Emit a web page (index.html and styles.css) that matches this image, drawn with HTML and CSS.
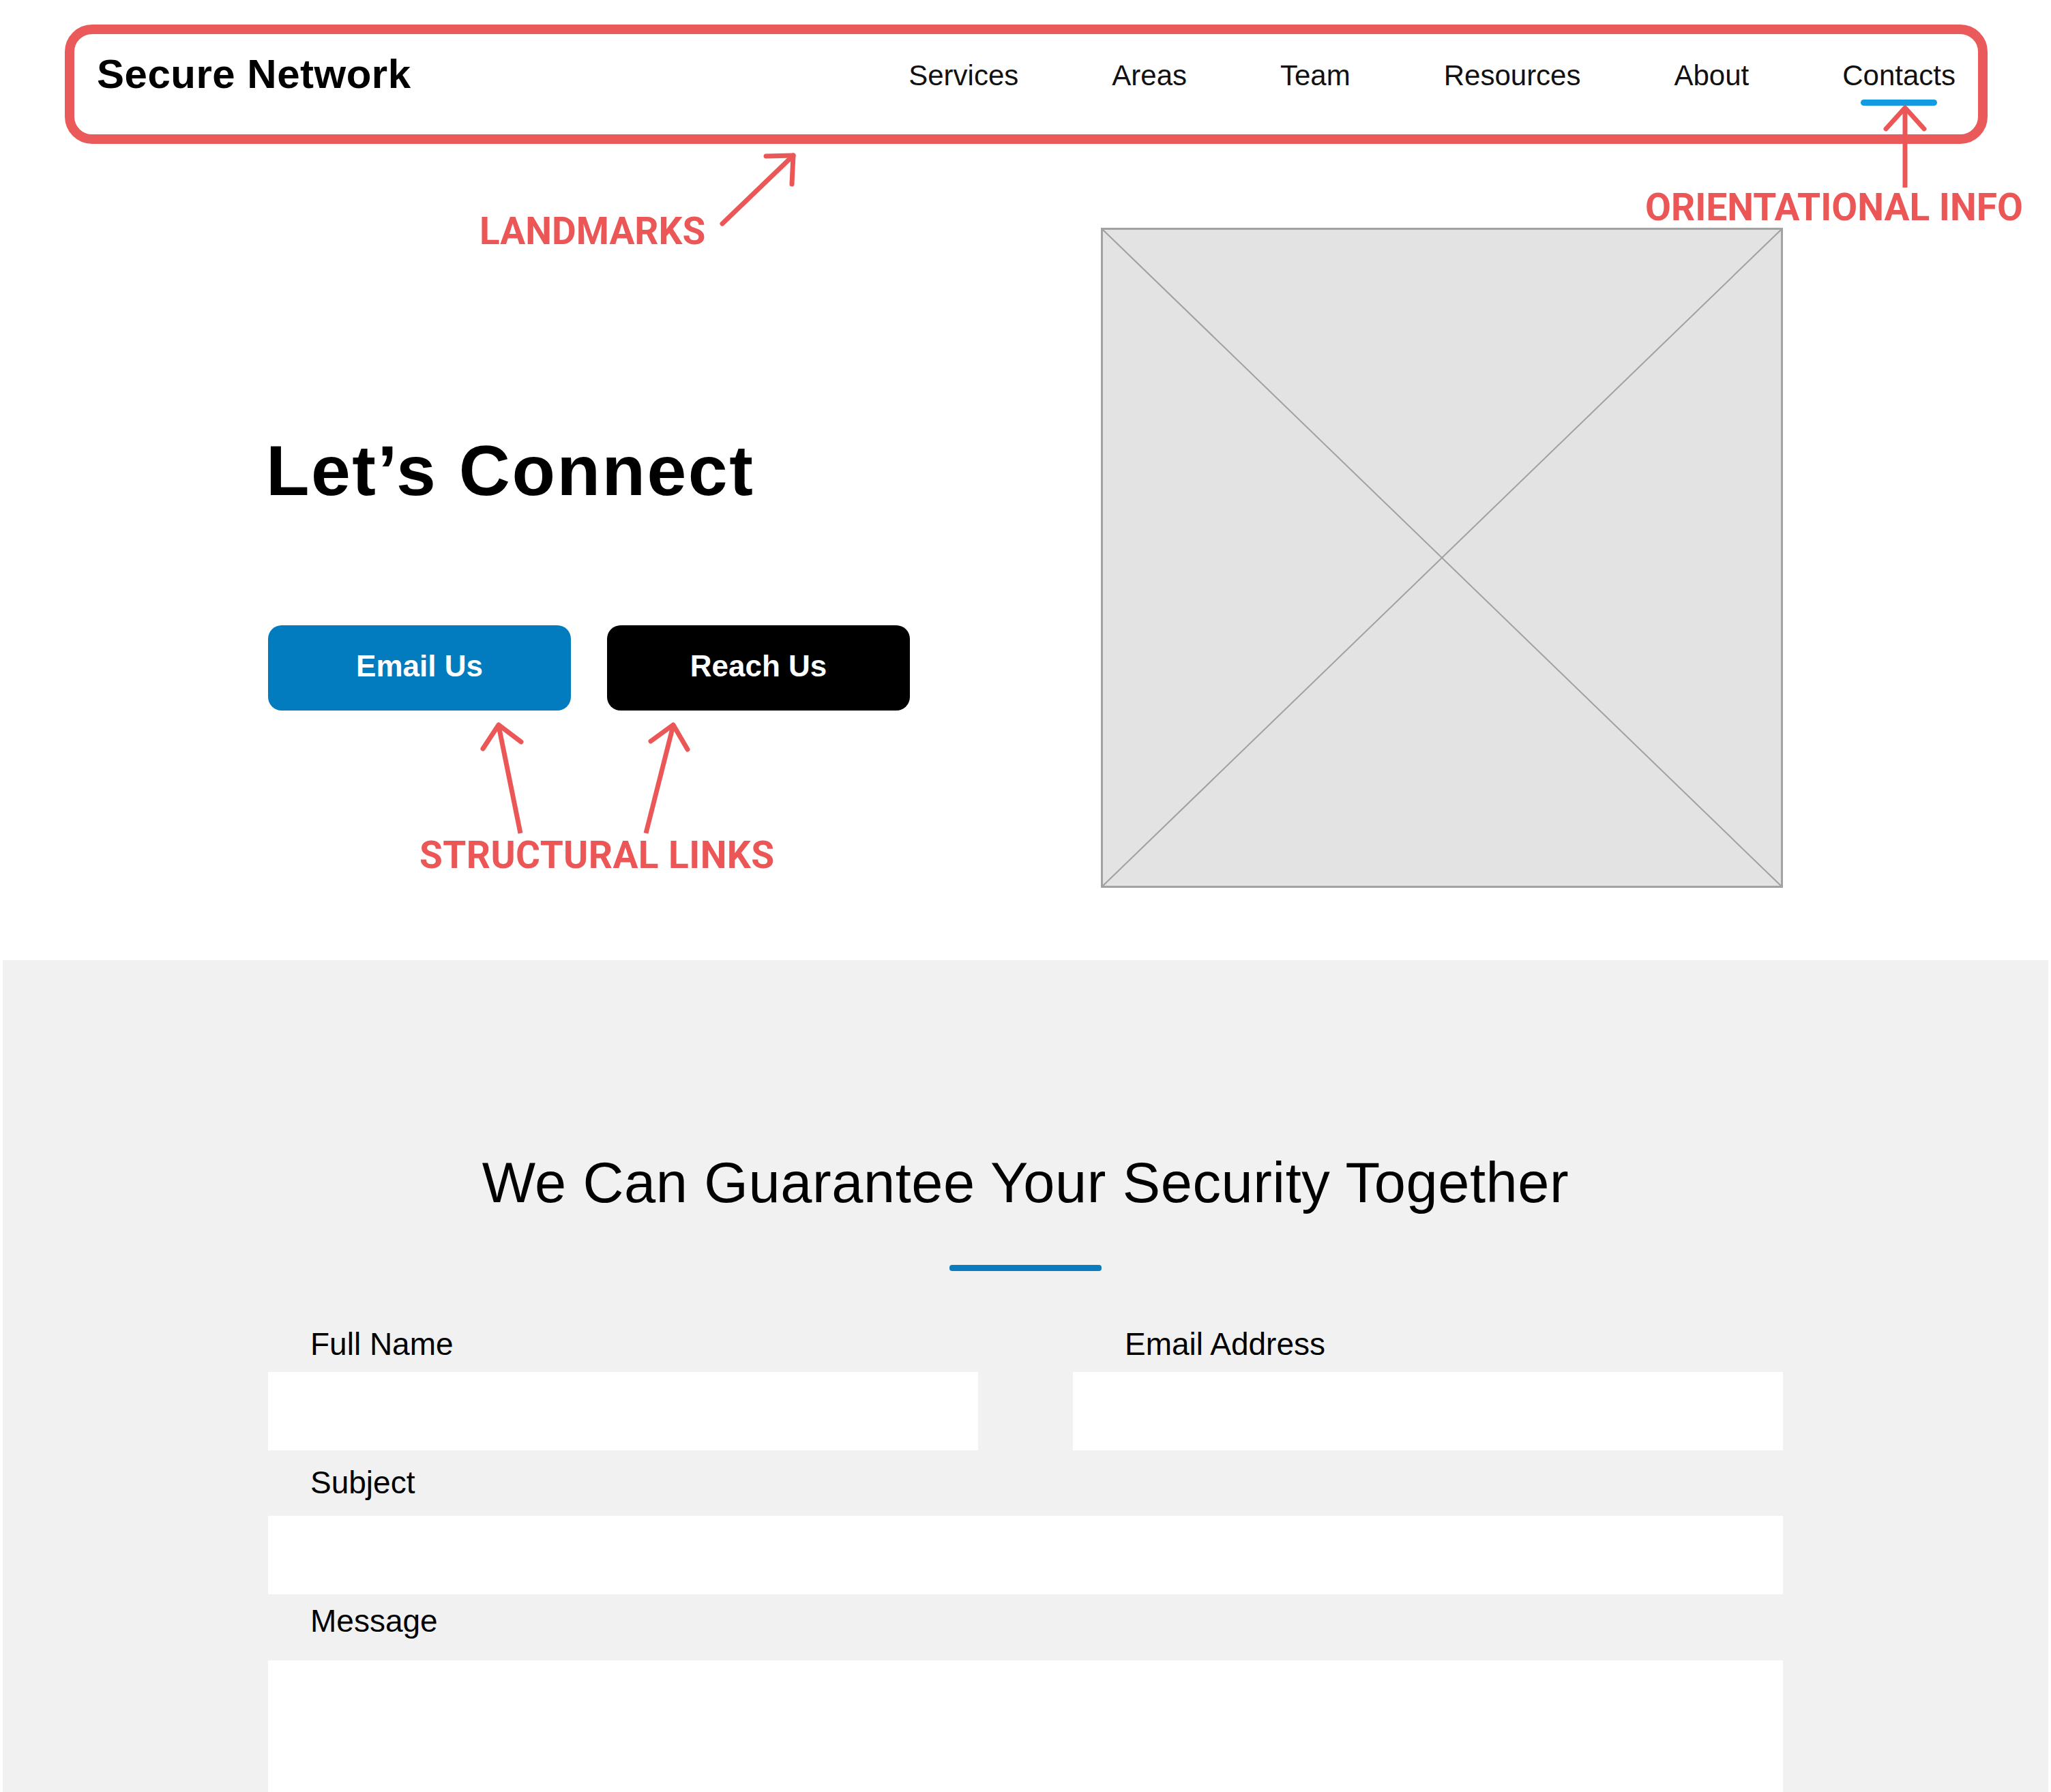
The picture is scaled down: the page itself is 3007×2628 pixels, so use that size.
FILE: index.html
```html
<!DOCTYPE html>
<html lang="en">
<head>
<meta charset="utf-8">
<title>Secure Network – Contacts</title>
<link rel="stylesheet" href="styles.css">
</head>
<body>
<div class="page">
  <header class="topbar">
    <div class="brand">Secure Network</div>
    <nav class="nav">
      <a class="nav-link" href="#">Services</a>
      <a class="nav-link" href="#">Areas</a>
      <a class="nav-link" href="#">Team</a>
      <a class="nav-link" href="#">Resources</a>
      <a class="nav-link" href="#">About</a>
      <a class="nav-link is-current" href="#">Contacts</a>
    </nav>
  </header>

  <section class="hero">
    <div class="hero-text">
      <h1 class="hero-title">Let’s Connect</h1>
      <div class="hero-actions">
        <a class="btn btn-blue" href="#">Email Us</a>
        <a class="btn btn-black" href="#">Reach Us</a>
      </div>
    </div>
    <div class="placeholder">
      <svg class="placeholder-x" viewBox="0 0 100 100" preserveAspectRatio="none">
        <line x1="0" y1="0" x2="100" y2="100" vector-effect="non-scaling-stroke"/>
        <line x1="100" y1="0" x2="0" y2="100" vector-effect="non-scaling-stroke"/>
      </svg>
    </div>
  </section>

  <section class="contact">
    <h2 class="contact-title">We Can Guarantee Your Security Together</h2>
    <div class="divider"></div>
    <form class="form">
      <div class="form-row two row-name">
        <div class="field">
          <label class="field-label">Full Name</label>
          <input class="field-input" type="text">
        </div>
        <div class="field">
          <label class="field-label indent-more">Email Address</label>
          <input class="field-input" type="email">
        </div>
      </div>
      <div class="form-row row-subject">
        <div class="field">
          <label class="field-label">Subject</label>
          <input class="field-input" type="text">
        </div>
      </div>
      <div class="form-row row-message">
        <div class="field">
          <label class="field-label">Message</label>
          <textarea class="field-input field-area"></textarea>
        </div>
      </div>
    </form>
  </section>

  <!-- annotation layer -->
  <div class="note note-landmarks">LANDMARKS</div>
  <div class="note note-orient">ORIENTATIONAL INFO</div>
  <div class="note note-links">STRUCTURAL LINKS</div>
  <svg class="arrows" width="3007" height="1400" viewBox="0 0 3007 1400">
    <g>
      <line x1="1059" y1="328" x2="1163" y2="228"/>
      <polyline points="1123,229 1163,228 1161,270"/>
      <line x1="2793" y1="160" x2="2793" y2="275" stroke-linecap="butt"/>
      <polyline points="2765,189 2793,158 2821,189"/>
      <line x1="763" y1="1222" x2="731" y2="1064" stroke-linecap="butt"/>
      <polyline points="708,1098 731,1063 764,1088"/>
      <line x1="947" y1="1222" x2="987" y2="1064" stroke-linecap="butt"/>
      <polyline points="954,1087 987,1063 1008,1099"/>
    </g>
  </svg>
</div>
</body>
</html>
```

FILE: styles.css
```css
* { box-sizing: border-box; }

html, body {
  margin: 0;
  padding: 0;
  background: #ffffff;
}

body {
  font-family: "Liberation Sans", Arial, sans-serif;
  color: #000;
}

.page {
  position: relative;
  width: 3007px;
  min-height: 2628px;
  overflow: hidden;
}

/* ---------- header ---------- */
.topbar {
  margin: 36px 93px 0 95px;
  height: 175px;
  border: 14px solid #eb5a5a;
  border-radius: 40px;
  display: flex;
  justify-content: space-between;
  align-items: flex-start;
  padding: 29px 33px 0 33px;
}

.brand {
  font-size: 60px;
  line-height: 1;
  font-weight: 700;
  letter-spacing: 0.5px;
}

.nav {
  display: flex;
  gap: 137px;
  margin-top: 11px;
}

.nav-link {
  position: relative;
  font-size: 42px;
  line-height: 1;
  color: #111;
  text-decoration: none;
}

.nav-link.is-current::after {
  content: "";
  position: absolute;
  left: 50%;
  top: 56px;
  width: 112px;
  height: 9px;
  margin-left: -56px;
  border-radius: 5px;
  background: #139ae0;
}

/* ---------- hero ---------- */
.hero {
  display: flex;
  margin-top: 123px;
  padding: 0 0 106px 393px;
}

.hero-text {
  flex: 0 0 1221px;
  padding-top: 304px;
}

.hero-title {
  margin: 0 0 0 -3px;
  font-size: 104px;
  line-height: 1;
  font-weight: 700;
  letter-spacing: 2.5px;
}

.hero-actions {
  display: flex;
  gap: 53px;
  margin-top: 175px;
}

.btn {
  width: 444px;
  height: 125px;
  border-radius: 20px;
  display: flex;
  align-items: center;
  justify-content: center;
  padding-bottom: 6px;
  font-size: 44px;
  font-weight: 700;
  color: #fff;
  text-decoration: none;
}

.btn-blue { background: #027cbe; }
.btn-black { background: #000; }

.placeholder {
  width: 1000px;
  height: 968px;
  border: 3px solid #a2a2a2;
  background: #e3e3e3;
}

.placeholder-x {
  display: block;
  width: 100%;
  height: 100%;
}

.placeholder-x line {
  stroke: #a0a0a0;
  stroke-width: 2;
}

/* ---------- contact form ---------- */
.contact {
  margin: 0 4px;
  background: #f1f1f1;
  padding: 285px 0 0;
  min-height: 1220px;
}

.contact-title {
  margin: 0;
  text-align: center;
  font-size: 83px;
  line-height: 1;
  font-weight: 400;
  letter-spacing: 0.6px;
}

.divider {
  width: 223px;
  height: 9px;
  border-radius: 4px;
  background: #0a7bbf;
  margin: 79px auto 0;
}

.form {
  width: 2221px;
  margin: 84px auto 0;
}

.form-row.two {
  display: grid;
  grid-template-columns: 1fr 1fr;
  gap: 139px;
}

.field-label {
  display: block;
  font-size: 46px;
  line-height: 1;
  padding-left: 62px;
  margin-bottom: 22px;
  color: #000;
}

.field-label.indent-more { padding-left: 76px; }

.row-name .field-label { margin-bottom: 18px; }
.row-subject { margin-top: 24px; }
.row-subject .field-label { margin-bottom: 26px; }
.row-message { margin-top: 16px; }
.row-message .field-label { margin-bottom: 35px; }

.field-input {
  display: block;
  width: 100%;
  height: 115px;
  border: none;
  outline: none;
  background: #fff;
  font: inherit;
  resize: none;
}

.field-area { height: 320px; }

/* ---------- annotations ---------- */
.note {
  position: absolute;
  font-family: Roboto, "Liberation Sans", sans-serif;
  font-weight: 700;
  font-size: 55px;
  line-height: 1;
  color: #eb5757;
  white-space: nowrap;
}

.note-landmarks { left: 703px; top: 312px; }
.note-orient { left: 2412px; top: 277px; }
.note-links { left: 615px; top: 1227px; font-size: 55px; letter-spacing: 0.4px; }

.arrows {
  position: absolute;
  left: 0;
  top: 0;
  pointer-events: none;
}

.arrows g {
  fill: none;
  stroke: #eb5757;
  stroke-width: 7;
  stroke-linecap: round;
  stroke-linejoin: round;
}
```
